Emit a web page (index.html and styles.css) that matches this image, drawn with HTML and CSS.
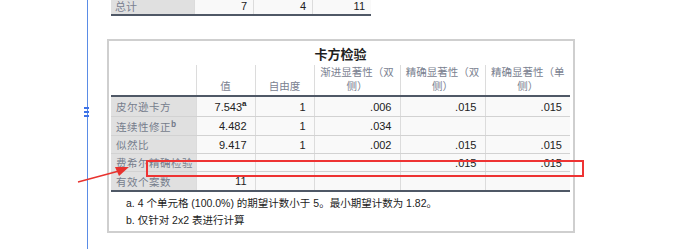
FILE: index.html
```html
<!DOCTYPE html>
<html lang="zh">
<head>
<meta charset="utf-8">
<link rel="stylesheet" href="styles.css">
</head>
<body>
<div class="doc">
  <div class="handle"><i></i><i></i><i></i></div>
  <table class="prev">
    <tr><td class="lab">总计</td><td>7</td><td>4</td><td>11</td></tr>
  </table>

  <div class="box">
    <div class="title">卡方检验</div>
    <table class="chi">
      <colgroup>
        <col class="c1"><col class="c2"><col class="c3"><col class="c4"><col class="c5"><col class="c6">
      </colgroup>
      <thead>
        <tr>
          <th class="blank"></th>
          <th>值</th>
          <th>自由度</th>
          <th>渐进显著性（双<br>侧）</th>
          <th>精确显著性（双<br>侧）</th>
          <th>精确显著性（单<br>侧）</th>
        </tr>
      </thead>
      <tbody>
        <tr class="r1"><td class="lab">皮尔逊卡方</td><td>7.543<sup>a</sup></td><td>1</td><td>.006</td><td>.015</td><td>.015</td></tr>
        <tr class="r2"><td class="lab">连续性修正<sup>b</sup></td><td>4.482</td><td>1</td><td>.034</td><td></td><td></td></tr>
        <tr class="r3"><td class="lab">似然比</td><td>9.417</td><td>1</td><td>.002</td><td>.015</td><td>.015</td></tr>
        <tr class="r4"><td class="lab">费希尔精确检验</td><td></td><td></td><td></td><td>.015</td><td>.015</td></tr>
        <tr class="r5 last"><td class="lab">有效个案数</td><td>11</td><td></td><td></td><td></td><td></td></tr>
      </tbody>
    </table>
    <div class="notes">
      <p>a. 4 个单元格 (100.0%) 的期望计数小于 5。最小期望计数为 1.82。</p>
      <p>b. 仅针对 2x2 表进行计算</p>
    </div>
  </div>

  <div class="redbox"></div>
  <svg class="arrow" width="60" height="24" viewBox="0 0 60 24">
    <line x1="1" y1="20" x2="42" y2="9" stroke="#e8322e" stroke-width="1.5"/>
    <polygon points="52,5 38,5 42,14" fill="#e8322e"/>
  </svg>
</div>
</body>
</html>
```

FILE: styles.css
```css
html, body {
  margin: 0;
  padding: 0;
  background: #ffffff;
}
body {
  width: 680px;
  height: 251px;
  overflow: hidden;
  position: relative;
  font-family: "Liberation Sans", "Noto Sans CJK SC", sans-serif;
}
.doc {
  margin-left: 87px;
  border-left: 1px solid #5a8ce6;
  height: 251px;
  padding-left: 19px;
  box-sizing: border-box;
}
.handle {
  position: absolute;
  left: 84px;
  top: 107px;
  display: flex;
  flex-direction: column;
  gap: 2px;
}
.handle i {
  display: block;
  width: 5px;
  height: 2px;
  background: #3d72e8;
}
.prev {
  border-collapse: collapse;
  margin-left: 4px;
  margin-top: -2px;
  font-size: 11px;
  border-bottom: 2px solid #4f5866;
}
.prev td {
  height: 16px;
  padding: 0 6px;
  text-align: right;
  color: #222;
  background: #f9f9f9;
  border-left: 1px solid #dcdcdc;
  width: 46px;
}
.prev td.lab {
  width: 73px;
  text-align: left;
  background: #e0e0e0;
  color: #7a8190;
  border-left: none;
  padding-left: 4px;
}
.box {
  margin-top: 23px;
  width: 468px;
  height: 194px;
  box-sizing: border-box;
  border: 2px solid #cfcfcf;
  padding: 0 3px 0 2px;
}
.title {
  height: 22px;
  line-height: 22px;
  padding-top: 2px;
  text-align: center;
  font-weight: bold;
  font-size: 13px;
  color: #1e1e1e;
  font-family: "Noto Sans CJK SC", sans-serif;
}
.chi {
  border-collapse: collapse;
  table-layout: fixed;
  width: 459px;
  font-size: 11px;
}
.c1 { width: 85px; }
.c2 { width: 59px; }
.c3 { width: 59px; }
.c4 { width: 86px; }
.c5 { width: 85px; }
.c6 { width: 85px; }
.chi th {
  height: 28px;
  padding: 0 2px 2px;
  vertical-align: bottom;
  font-weight: normal;
  font-size: 10.5px;
  line-height: 14px;
  color: #7a8190;
  font-family: "Noto Sans CJK SC", sans-serif;
  border-left: 1px solid #dcdcdc;
  border-bottom: 2px solid #4f5866;
  text-align: center;
}
.chi th.blank {
  border-left: none;
}
.chi td {
  padding: 0 8px 0 4px;
  text-align: right;
  color: #222;
  background: #f9f9f9;
  border-left: 1px solid #dcdcdc;
  border-bottom: 1px solid #d2d2d2;
  white-space: nowrap;
}
.chi td.lab {
  text-align: left;
  background: #e0e0e0;
  color: #767d8c;
  border-left: none;
  padding-left: 5px;
  font-family: "Noto Sans CJK SC", sans-serif;
  font-size: 10.5px;
  letter-spacing: 0.5px;
}
.r1 td { height: 19px; }
.r2 td { height: 18px; }
.r3 td { height: 17px; }
.r4 td { height: 17px; }
.r5 td { height: 18px; }
.chi tr.last td {
  border-bottom: 2px solid #4f5866;
}
.chi sup {
  font-size: 8px;
  line-height: 0;
  font-weight: bold;
}
.notes {
  padding: 3px 0 0 15px;
  font-size: 10.5px;
  color: #222;
  font-family: "Liberation Sans", "Noto Sans CJK SC", sans-serif;
}
.notes p {
  margin: 0;
  height: 17px;
  line-height: 17px;
}
.redbox {
  position: absolute;
  left: 146px;
  top: 160px;
  width: 438px;
  height: 17px;
  box-sizing: border-box;
  border: 2px solid #ee3333;
}
.arrow {
  position: absolute;
  left: 77px;
  top: 162px;
}
```
